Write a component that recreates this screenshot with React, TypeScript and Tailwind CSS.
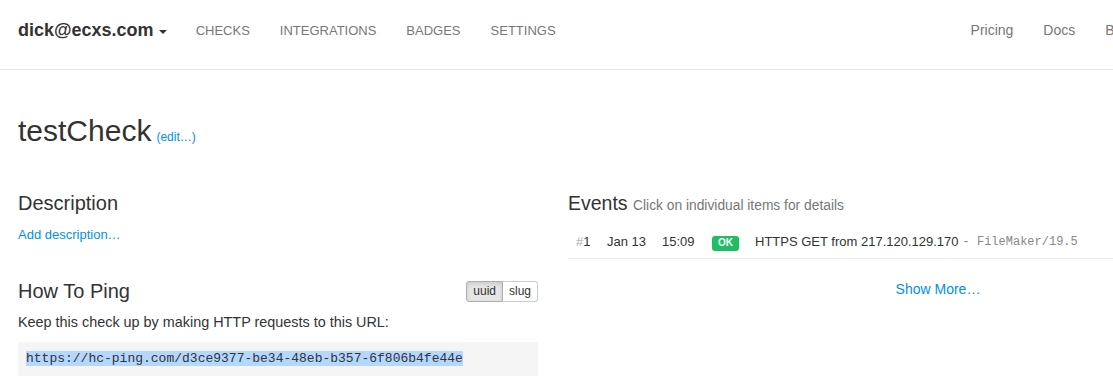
const navLinks = ["CHECKS", "INTEGRATIONS", "BADGES", "SETTINGS"];
const rightLinks = ["Pricing", "Docs", "Blog", "Log Out"];

const Navbar = () => (
  <nav className="h-[70px] border-b border-[#e7e7e7] flex items-center px-[18px] pb-[8px]">
    <div className="flex items-center text-[18px] font-bold text-[#333]">
      dick@ecxs.com
      <span className="ml-[5px] mt-[2px] border-t-[4px] border-t-[#333] border-x-[4px] border-x-transparent" />
    </div>
    <ul className="flex ml-[14px]">
      {navLinks.map((l) => (
        <li key={l} className="px-[15px] text-[13px] text-[#777]">
          {l}
        </li>
      ))}
    </ul>
    <ul className="flex ml-[385px]">
      {rightLinks.map((l) => (
        <li key={l} className="px-[15px] text-[14px] text-[#777]">
          {l}
        </li>
      ))}
    </ul>
  </nav>
);

const Description = () => (
  <section>
    <h2 className="text-[20px] leading-[22px] text-[#333]">Description</h2>
    <a className="block mt-[12px] text-[13px] leading-[18px] text-[#0091ea]">Add description…</a>
  </section>
);

const HowToPing = () => (
  <section className="mt-[36px]">
    <div className="flex items-center justify-between h-[22px]">
      <h2 className="text-[20px] leading-[22px] text-[#333]">How To Ping</h2>
      <div className="flex text-[12px] leading-[19px] text-[#333]">
        <span className="px-[6px] bg-[#e6e6e6] border border-[#adadad] rounded-l-[3px] shadow-[inset_0_2px_4px_rgba(0,0,0,0.12)]">
          uuid
        </span>
        <span className="px-[6px] bg-white border border-l-0 border-[#ccc] rounded-r-[3px]">slug</span>
      </div>
    </div>
    <p className="mt-[10px] text-[14.4px] leading-[20px] text-[#333]">
      Keep this check up by making HTTP requests to this URL:
    </p>
    <div className="mt-[10px] h-[60px] bg-[#f5f5f5] pt-[7px] px-[8px] text-[13px] leading-[18px]">
      <code className="font-['Liberation_Mono',monospace] text-[#333] bg-[#b3d7ff]">
        https://hc-ping.com/d3ce9377-be34-48eb-b357-6f806b4fe44e
      </code>
    </div>
  </section>
);

const Events = () => (
  <section>
    <h2 className="text-[19.5px] leading-[22px] text-[#333]">
      Events{" "}
      <small className="text-[13.8px] text-[#777]">Click on individual items for details</small>
    </h2>
    <div className="mt-[9px] h-[33px] border-b border-[#eee] flex items-center pl-[8px] text-[13px] text-[#333]">
      <span className="w-[31px]">
        <span className="text-[#aaa]">#</span>1
      </span>
      <span className="w-[55px]">Jan 13</span>
      <span className="w-[50px]">15:09</span>
      <span className="w-[43px]">
        <span className="inline-flex items-center h-[15px] px-[6px] rounded-[3px] bg-[#22bc66] text-white text-[10px] font-bold leading-none">
          OK
        </span>
      </span>
      <span>HTTPS GET from 217.120.129.170</span>
      <span className="ml-[4px] font-['Liberation_Mono',monospace] text-[12px] text-[#888]">- FileMaker/19.5</span>
    </div>
    <div className="mt-[20px] text-center text-[14px] leading-[20px] text-[#0091ea]">Show More…</div>
  </section>
);

export default function App() {
  return (
    <div className="w-full h-[376px] overflow-hidden bg-white font-['Liberation_Sans',Arial,sans-serif]">
      <div className="w-[1330px]">
        <Navbar />
        <div className="px-[18px] pt-[44px]">
          <h1 className="flex items-baseline text-[30px] leading-[33px] text-[#333]">
            testCheck
            <a className="ml-[5px] text-[12px] text-[#0091ea]">(edit…)</a>
          </h1>
          <div className="mt-[38px] flex gap-[30px]">
            <div className="w-[520px] shrink-0">
              <Description />
              <HowToPing />
            </div>
            <div className="w-[740px] shrink-0">
              <Events />
            </div>
          </div>
        </div>
      </div>
    </div>
  );
}
